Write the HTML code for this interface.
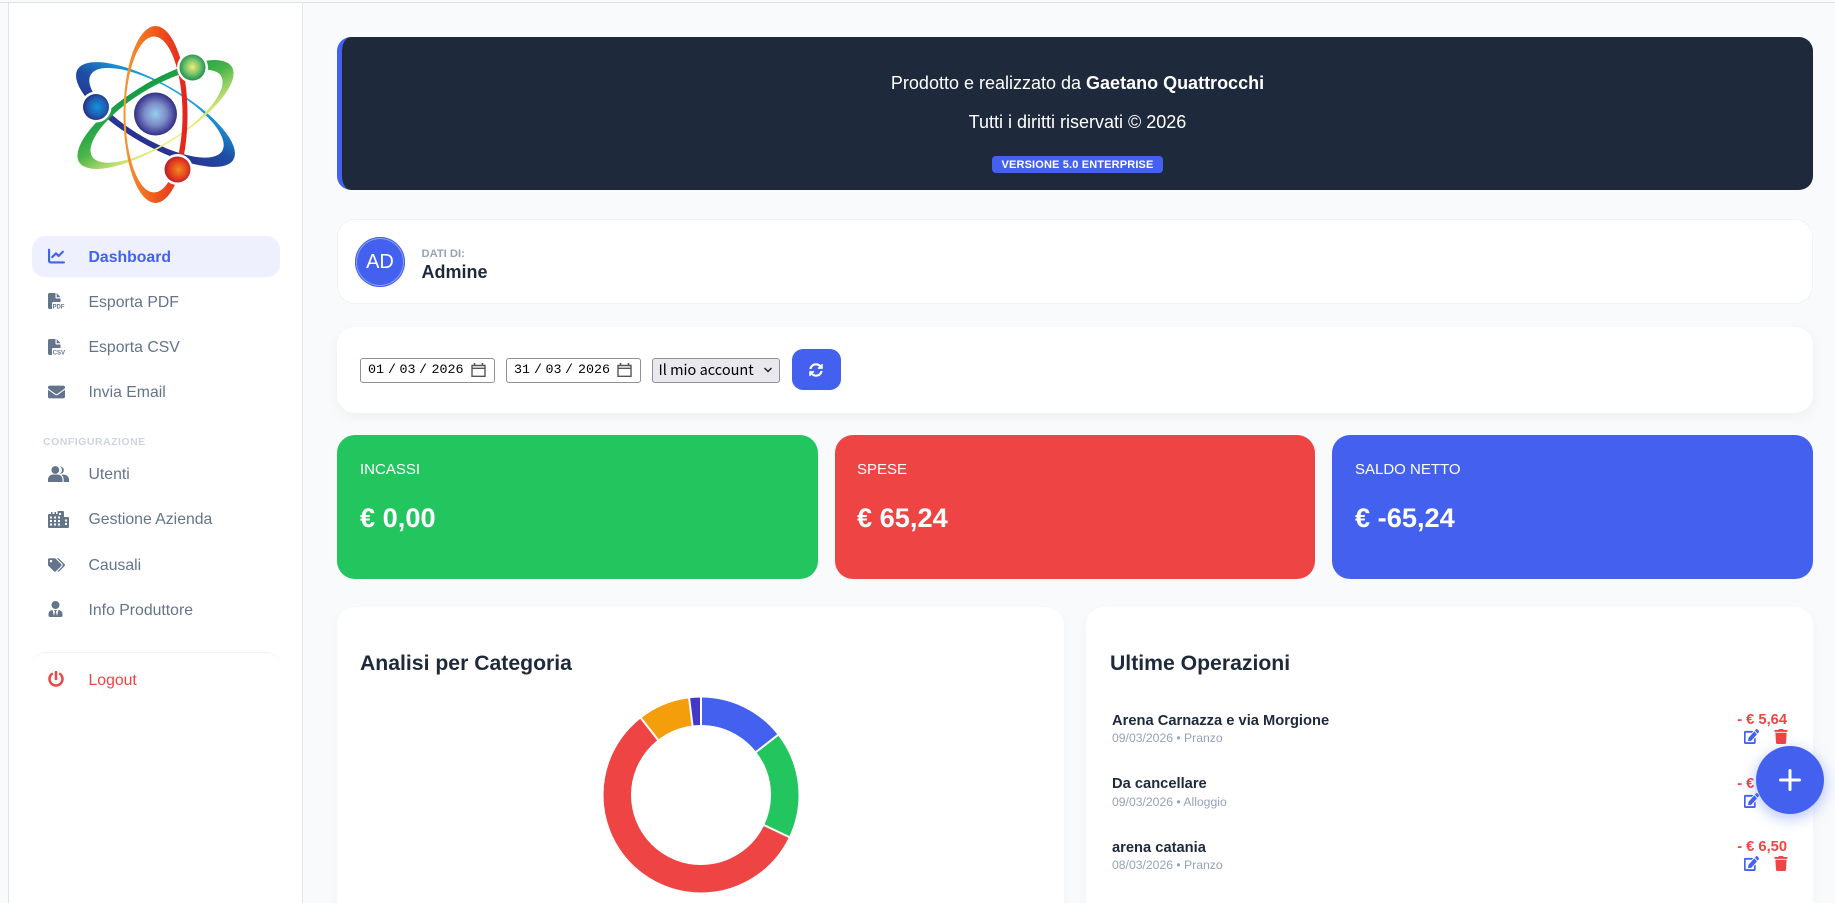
<!DOCTYPE html>
<html lang="it"><head><meta charset="utf-8"><title>Dashboard</title>
<style>
html,body{margin:0;padding:0;width:1835px;height:903px;overflow:hidden}
body{position:relative;background:#f8fafc;font-family:"Liberation Sans",Arial,sans-serif;color:#1e293b}
#w{position:absolute;left:0;top:0;width:1835px;height:903px;overflow:hidden}
.a{position:absolute}
.t{position:absolute;white-space:nowrap;line-height:1}
.nav{position:absolute;left:88.5px;font-size:15.8px;color:#64748b;white-space:nowrap;line-height:20px}
.ic{position:absolute;fill:#64748b}
.card{position:absolute;background:#fff;border-radius:18px}
.stat{position:absolute;top:435px;height:144px;border-radius:18px;color:#fff}
.stat .l{position:absolute;left:23px;top:26px;font-size:15px;line-height:17px;white-space:nowrap}
.stat .v{position:absolute;left:23px;top:67px;font-size:27.2px;font-weight:700;line-height:32px;white-space:nowrap}
.date{position:absolute;top:358px;height:25px;box-sizing:border-box;border:1px solid #8f8f9d;border-radius:3px;background:#fff}
.d{position:absolute;top:358px;font-family:"Liberation Mono",monospace;font-size:13.33px;line-height:25px;color:#000;white-space:pre}
.name{position:absolute;left:1112px;font-size:14.7px;font-weight:700;line-height:16px;white-space:nowrap;color:#1e293b}
.sub{position:absolute;left:1112px;font-size:12.2px;line-height:14px;white-space:nowrap;color:#94a3b8}
.amt{position:absolute;right:48px;font-size:14.7px;font-weight:700;line-height:16px;white-space:nowrap;color:#ef4444}
</style></head><body><div id="w">

<!-- frame -->
<div class="a" style="left:0;top:2px;width:1835px;height:1px;background:#dfe1e7"></div>
<div class="a" style="left:8px;top:2px;width:295px;height:901px;background:#fff;border-left:1px solid #e0e2e8;border-right:1px solid #e2e8f0;box-sizing:border-box;border-top:1px solid #dfe1e7"></div>

<!-- logo -->
<svg class="a" style="left:60px;top:20px" width="190" height="190" viewBox="60 20 190 190">
<defs>
<linearGradient id="gr" gradientUnits="userSpaceOnUse" x1="-32" y1="0" x2="32" y2="0"><stop offset="0" stop-color="#f7982f"/><stop offset=".5" stop-color="#ee5a1c"/><stop offset="1" stop-color="#e3201f"/></linearGradient>
<linearGradient id="gg" gradientUnits="userSpaceOnUse" x1="-31" y1="0" x2="31" y2="0"><stop offset="0" stop-color="#129a46"/><stop offset=".45" stop-color="#4bb54a"/><stop offset="1" stop-color="#eef07e"/></linearGradient>
<linearGradient id="gb" gradientUnits="userSpaceOnUse" x1="-31" y1="0" x2="31" y2="0"><stop offset="0" stop-color="#2b2f8f"/><stop offset=".5" stop-color="#1d4fa5"/><stop offset="1" stop-color="#1ba3e0"/></linearGradient>
<radialGradient id="n" cx=".5" cy=".5" r=".5"><stop offset="0" stop-color="#93cfee"/><stop offset=".5" stop-color="#7f8ec8"/><stop offset=".92" stop-color="#3e3c94"/><stop offset="1" stop-color="#35337f"/></radialGradient>
<radialGradient id="bb" cx=".55" cy=".5" r=".55"><stop offset="0" stop-color="#0f95df"/><stop offset=".6" stop-color="#1f5fb0"/><stop offset="1" stop-color="#2a2a80"/></radialGradient>
<radialGradient id="bg" cx=".5" cy=".48" r=".55"><stop offset="0" stop-color="#f4ec70"/><stop offset=".5" stop-color="#7cc56e"/><stop offset="1" stop-color="#0f8a48"/></radialGradient>
<radialGradient id="br" cx=".55" cy=".5" r=".55"><stop offset="0" stop-color="#f08a1e"/><stop offset=".6" stop-color="#e6401f"/><stop offset="1" stop-color="#b01c30"/></radialGradient>
</defs>
<g transform="translate(155.5 114.5)">
<path fill="url(#gb)" fill-rule="evenodd" transform="rotate(-60)" d="M0-90A31 90 0 0 1 0 90A31 90 0 0 1 0-90ZM2-76A27.5 76 0 0 1 2 76A27.5 76 0 0 1 2-76Z"/>
<path fill="url(#gg)" fill-rule="evenodd" transform="rotate(58)" d="M0-90A31 90 0 0 1 0 90A31 90 0 0 1 0-90ZM2-76A27.5 76 0 0 1 2 76A27.5 76 0 0 1 2-76Z"/>
<path fill="url(#gr)" fill-rule="evenodd" d="M0-88.5A32 88.5 0 0 1 0 88.5A32 88.5 0 0 1 0-88.5ZM-1.5-78A28.5 78 0 0 1 -1.5 78A28.5 78 0 0 1 -1.5-78Z"/>
</g>
<circle cx="155.5" cy="114" r="21.5" fill="url(#n)"/>
<circle cx="96" cy="107" r="15.500" fill="#fff"/><circle cx="96" cy="107" r="13" fill="url(#bb)"/>
<circle cx="192.500" cy="67.500" r="15.500" fill="#fff"/><circle cx="192.500" cy="67.500" r="13" fill="url(#bg)"/>
<circle cx="177.500" cy="169.500" r="15.500" fill="#fff"/><circle cx="177.500" cy="169.500" r="13" fill="url(#br)"/>
</svg>

<!-- sidebar -->
<div class="a" style="left:32px;top:236px;width:248px;height:41px;border-radius:13px;background:#eef1fd"></div>
<svg class="ic" style="left:48px;top:248px;fill:#4361ee" width="17" height="16" viewBox="0 32 512 448"><path d="M64 64c0-17.700-14.300-32-32-32S0 46.300 0 64V400c0 44.200 35.800 80 80 80H480c17.700 0 32-14.300 32-32s-14.300-32-32-32H80c-8.800 0-16-7.200-16-16V64zm406.600 86.600c12.500-12.500 12.500-32.800 0-45.300s-32.800-12.500-45.300 0L320 210.700l-57.400-57.400c-12.500-12.500-32.800-12.500-45.300 0l-112 112c-12.500 12.500-12.500 32.800 0 45.300s32.800 12.500 45.300 0L240 221.300l57.400 57.400c12.500 12.500 32.800 12.500 45.300 0l128-128z"/></svg>
<div class="nav" style="top:248px;color:#4361ee;font-weight:700">Dashboard</div>

<svg class="ic" style="left:48px;top:293px" width="17" height="16" viewBox="0 0 17 16"><path d="M1.500 0H7.500V4.500c0 .6.400 1 1 1H12.500V9H5.500a1.500 1.500 0 0 0-1.500 1.500V16H1.500C.7 16 0 15.300 0 14.500V1.500C0 .7.700 0 1.500 0ZM8.700 0L12.500 4.300H8.700Z"/><text x="4.600" y="15.700" font-family="Liberation Sans" font-size="6.200" font-weight="700" textLength="11.800" lengthAdjust="spacingAndGlyphs">PDF</text></svg>
<div class="nav" style="top:293px">Esporta PDF</div>

<svg class="ic" style="left:48px;top:339px" width="18" height="16" viewBox="0 0 18 16"><path d="M1.500 0H7.500V4.500c0 .6.400 1 1 1H12.500V9H5.500a1.500 1.500 0 0 0-1.500 1.500V16H1.500C.7 16 0 15.300 0 14.500V1.500C0 .7.700 0 1.500 0ZM8.700 0L12.500 4.300H8.700Z"/><text x="4.600" y="15.700" font-family="Liberation Sans" font-size="6.200" font-weight="700" textLength="12.500" lengthAdjust="spacingAndGlyphs">CSV</text></svg>
<div class="nav" style="top:338px">Esporta CSV</div>

<svg class="ic" style="left:48px;top:385px" width="17" height="14" viewBox="0 64 512 384"><path d="M502.300 190.800c3.900-3.100 9.700-.2 9.700 4.700V400c0 26.500-21.500 48-48 48H48c-26.500 0-48-21.500-48-48V195.600c0-5 5.700-7.800 9.700-4.700 22.400 17.400 52.100 39.500 154.100 113.600 21.100 15.400 56.700 47.800 92.200 47.600 35.700.3 72-32.800 92.300-47.600 102-74.100 131.600-96.300 154-113.700zM256 320c23.200.4 56.600-29.200 73.400-41.400 132.700-96.300 142.800-104.700 173.400-128.700 5.800-4.500 9.200-11.500 9.200-18.900v-19c0-26.500-21.500-48-48-48H48C21.500 64 0 85.500 0 112v19c0 7.400 3.400 14.300 9.200 18.900 30.600 23.900 40.700 32.400 173.400 128.700 16.800 12.200 50.200 41.800 73.400 41.400z"/></svg>
<div class="nav" style="top:383px">Invia Email</div>

<div class="t" style="left:43px;top:437px;font-size:10.5px;font-weight:700;color:#cbd5e1;letter-spacing:.5px">CONFIGURAZIONE</div>

<svg class="ic" style="left:48px;top:466px" width="21" height="16" viewBox="0 0 21 16"><circle cx="7.300" cy="4" r="3.900"/><path d="M0 16V13.500C0 10.500 2.500 8.500 5 8.500H9.500C12 8.500 14.500 10.500 14.500 13.500V16Z"/><path d="M11.500 7.700A3.900 3.900 0 0 0 11.800.6 3.600 3.600 0 1 1 11.500 7.700Z"/><path d="M13.200 8.600H15.800C18.600 8.600 21 10.800 21 13.500V16H15.700V13.500C15.700 11.500 14.700 9.800 13.200 8.600Z"/></svg>
<div class="nav" style="top:465px">Utenti</div>

<svg class="ic" style="left:48px;top:511px" width="21" height="17" viewBox="0 0 21 17"><path fill-rule="evenodd" d="M1 3H3V1H4.500V3H6.500V1H8V3H9.500V1A1 1 0 0 1 10.500 0H15A1 1 0 0 1 16 1V6H20A1 1 0 0 1 21 7V16A1 1 0 0 1 20 17H1A1 1 0 0 1 0 16V4A1 1 0 0 1 1 3ZM2 5.500V7.500H4V5.500ZM2 9V11H4V9ZM2 12.500V14.500H4V12.500ZM6 5.500V7.500H8V5.500ZM6 9V11H8V9ZM6 12.500V14.500H8V12.500ZM10 5.500V7.500H12V5.500ZM10 9V11H12V9ZM10 12.500V14.500H12V12.500ZM11 2V4H13V2ZM17 8.500V10.500H19V8.500ZM17 12V14H19V12Z"/></svg>
<div class="nav" style="top:510px">Gestione Azienda</div>

<svg class="ic" style="left:48px;top:558px" width="17" height="14" viewBox="0 0 640 512"><path d="M497.941 225.941L286.059 14.059A48 48 0 0 0 252.118 0H48C21.490 0 0 21.490 0 48v204.118a48 48 0 0 0 14.059 33.941l211.882 211.882c18.744 18.745 49.136 18.746 67.882 0l204.118-204.118c18.745-18.745 18.745-49.137 0-67.882zM112 160c-26.510 0-48-21.490-48-48s21.490-48 48-48 48 21.490 48 48-21.490 48-48 48zm513.941 133.823L421.823 497.941c-18.745 18.745-49.137 18.745-67.882 0l-.36-.36L527.640 323.522c16.999-16.999 26.360-39.600 26.360-63.640s-9.362-46.641-26.360-63.640L331.397 0h48.721a48 48 0 0 1 33.941 14.059l211.882 211.882c18.745 18.745 18.745 49.137 0 67.882z"/></svg>
<div class="nav" style="top:556px">Causali</div>

<svg class="ic" style="left:48px;top:601px" width="15" height="16" viewBox="0 0 448 512"><path d="M224 256c70.700 0 128-57.300 128-128S294.700 0 224 0 96 57.300 96 128s57.300 128 128 128zm95.800 32.600L272 480l-32-136 32-56h-96l32 56-32 136-47.800-191.400C56.900 292 0 350.300 0 422.400V464c0 26.500 21.500 48 48 48h352c26.500 0 48-21.500 48-48v-41.600c0-72.100-56.900-130.400-128.200-133.800z"/></svg>
<div class="nav" style="top:601px">Info Produttore</div>

<div class="a" style="left:32px;top:652px;width:248px;height:30px;box-sizing:border-box;border-top:1px solid #eef0f3;border-radius:14px 14px 0 0"></div>
<svg class="ic" style="left:48px;top:671px;fill:#ef4444" width="16" height="16" viewBox="0 0 512 512"><path d="M400 54.100c63 45 104 118.600 104 201.900 0 136.800-110.800 247.700-247.500 248C120 504.300 8.200 393 8 256.400 7.900 173.100 48.900 99.300 111.800 54.200c11.700-8.300 28-4.800 35 7.700L162.600 90c5.900 10.500 3.100 23.800-6.600 31-41.500 30.800-68 79.600-68 134.900-.1 92.300 74.500 168.100 168 168.100 91.600 0 168.600-74.200 168-169.100-.3-51.800-24.700-101.800-68.100-134-9.700-7.200-12.400-20.500-6.500-30.900l15.800-28.100c7-12.400 23.200-16.100 34.800-7.800zM296 264V24c0-13.300-10.700-24-24-24h-32c-13.300 0-24 10.700-24 24v240c0 13.300 10.700 24 24 24h32c13.300 0 24-10.700 24-24z"/></svg>
<div class="nav" style="top:671px;color:#ef4444">Logout</div>

<!-- banner -->
<div class="a" style="left:337px;top:37px;width:1476px;height:153px;box-sizing:border-box;background:#1e293b;border-left:5px solid #4361ee;border-radius:14px"></div>
<div class="t" style="left:342px;width:1471px;top:73px;text-align:center;font-size:18px;line-height:20px;color:#fff">Prodotto e realizzato da <b>Gaetano Quattrocchi</b></div>
<div class="t" style="left:342px;width:1471px;top:112px;text-align:center;font-size:18px;line-height:20px;color:#fff">Tutti i diritti riservati © 2026</div>
<div class="t" style="left:992px;top:156px;width:171px;height:17px;background:#4361ee;border-radius:4px;text-align:center;color:#fff;font-size:11px;font-weight:700;line-height:18px;letter-spacing:.15px">VERSIONE 5.0 ENTERPRISE</div>

<!-- user card -->
<div class="card" style="left:337px;top:219px;width:1476px;height:85px;box-sizing:border-box;border:1px solid #f0f2f5"></div>
<div class="a" style="left:355px;top:237px;width:50px;height:50px;border-radius:50%;background:#4361ee;box-shadow:inset 0 0 0 1px #4361ee,inset 0 0 0 2px #8ea1f4"></div>
<div class="t" style="left:355px;width:50px;top:252px;text-align:center;font-size:20px;line-height:20px;color:#fff">AD</div>
<div class="t" style="left:421.5px;top:249px;font-size:11.2px;font-weight:700;color:#94a3b8">DATI DI:</div>
<div class="t" style="left:421.5px;top:262px;font-size:18px;font-weight:700;line-height:21px;color:#1e293b">Admine</div>

<!-- filters -->
<div class="card" style="left:337px;top:327px;width:1476px;height:86px;box-shadow:0 4px 12px rgba(0,0,0,.05)"></div>
<div class="date" style="left:360px;width:135px"></div>
<div class="d" style="left:368px">01</div><div class="d" style="left:388px">/</div><div class="d" style="left:399.5px">03</div><div class="d" style="left:419px">/</div><div class="d" style="left:431.5px">2026</div>
<svg class="a" style="left:471px;top:362px" width="15" height="16" viewBox="0 0 15 16"><path fill="none" stroke="#555" stroke-width="1.4" d="M1 3.500H14V14.300H1ZM1 6.300H14"/><path d="M3.500 1V4M11.500 1V4" stroke="#555" stroke-width="1.6"/></svg>
<div class="date" style="left:506px;width:135px"></div>
<div class="d" style="left:514px">31</div><div class="d" style="left:534px">/</div><div class="d" style="left:545.5px">03</div><div class="d" style="left:565px">/</div><div class="d" style="left:578px">2026</div>
<svg class="a" style="left:617px;top:362px" width="15" height="16" viewBox="0 0 15 16"><path fill="none" stroke="#555" stroke-width="1.4" d="M1 3.500H14V14.300H1ZM1 6.300H14"/><path d="M3.500 1V4M11.500 1V4" stroke="#555" stroke-width="1.6"/></svg>
<div class="a" style="left:652px;top:358px;width:128px;height:25px;box-sizing:border-box;border:1px solid #8f8f9d;border-radius:3px;background:#e9e9ed"></div>
<div class="t" style="left:658.5px;top:358px;font-family:'Noto Sans CJK SC',sans-serif;font-size:14.5px;line-height:24px;color:#000">Il mio account</div>
<svg class="a" style="left:763px;top:366px" width="10" height="8" viewBox="0 0 10 8"><path d="M1.500 2L5 5.500 8.500 2" fill="none" stroke="#222" stroke-width="1.500"/></svg>
<div class="a" style="left:792px;top:349px;width:49px;height:41px;border-radius:11px;background:#4361ee"></div>
<svg class="a" style="left:809px;top:363px;fill:#fff" width="14" height="14" viewBox="0 0 512 512"><path d="M370.720 133.280C339.458 104.008 298.888 87.962 255.848 88c-77.458.068-144.328 53.178-162.791 126.850-1.344 5.363-6.122 9.150-11.651 9.150H24.103c-7.498 0-13.194-6.807-11.807-14.176C33.933 94.924 134.813 8 256 8c66.448 0 126.791 26.136 171.315 68.685L463.030 40.970C478.149 25.851 504 36.559 504 57.941V192c0 13.255-10.745 24-24 24H345.941c-21.382 0-32.090-25.851-16.971-40.971l41.750-41.749zM32 296h134.059c21.382 0 32.090 25.851 16.971 40.971l-41.750 41.750c31.262 29.273 71.835 45.319 114.876 45.280 77.418-.07 144.315-53.144 162.787-126.849 1.344-5.363 6.122-9.150 11.651-9.150h57.304c7.498 0 13.194 6.807 11.807 14.176C478.067 417.076 377.187 504 256 504c-66.448 0-126.791-26.136-171.315-68.685L48.970 471.030C33.851 486.149 8 475.441 8 454.059V320c0-13.255 10.745-24 24-24z"/></svg>

<!-- stats -->
<div class="stat" style="left:337px;width:481px;background:#22c55e"><div class="l">INCASSI</div><div class="v">€ 0,00</div></div>
<div class="stat" style="left:835px;width:480px;background:#ef4444"><div class="l" style="left:22px">SPESE</div><div class="v" style="left:22px">€ 65,24</div></div>
<div class="stat" style="left:1332px;width:481px;background:#4361ee"><div class="l" style="left:23px">SALDO NETTO</div><div class="v" style="left:23px">€ -65,24</div></div>

<!-- bottom cards -->
<div class="card" style="left:337px;top:607px;width:727px;height:320px;box-shadow:0 4px 12px rgba(0,0,0,.03)"></div>
<div class="card" style="left:1086px;top:607px;width:727px;height:320px;box-shadow:0 4px 12px rgba(0,0,0,.03)"></div>
<div class="t" style="left:360px;top:652px;font-size:21.2px;font-weight:700;line-height:24px">Analisi per Categoria</div>
<div class="t" style="left:1110px;top:652px;font-size:21.2px;font-weight:700;line-height:24px">Ultime Operazioni</div>

<!-- donut -->
<svg class="a" style="left:590px;top:685px" width="222" height="218" viewBox="-111 -110 222 218">
<g fill="none" stroke-width="27.500" transform="rotate(-90)">
<circle r="83.750" pathLength="360" stroke="#4361ee" stroke-dasharray="52 360" stroke-dashoffset="0"/>
<circle r="83.750" pathLength="360" stroke="#22c55e" stroke-dasharray="63.500 360" stroke-dashoffset="-52"/>
<circle r="83.750" pathLength="360" stroke="#ef4444" stroke-dasharray="206.500 360" stroke-dashoffset="-115.500"/>
<circle r="83.750" pathLength="360" stroke="#f59e0b" stroke-dasharray="31 360" stroke-dashoffset="-322"/>
<circle r="83.750" pathLength="360" stroke="#4338ca" stroke-dasharray="7 360" stroke-dashoffset="-353"/>
</g>
<g stroke="#fff" stroke-width="2">
<path d="M0-68V-99" transform="rotate(0)"/><path d="M0-68V-99" transform="rotate(52)"/><path d="M0-68V-99" transform="rotate(115.500)"/><path d="M0-68V-99" transform="rotate(322)"/><path d="M0-68V-99" transform="rotate(353)"/>
</g>
</svg>

<!-- operations -->
<div class="name" style="top:713px">Arena Carnazza e via Morgione</div><div class="sub" style="top:731px">09/03/2026 • Pranzo</div>
<div class="name" style="top:776px">Da cancellare</div><div class="sub" style="top:795px">09/03/2026 • Alloggio</div>
<div class="name" style="top:840px">arena catania</div><div class="sub" style="top:858px">08/03/2026 • Pranzo</div>
<div class="amt" style="top:712px">- € 5,64</div>
<div class="amt" style="top:776px">- € 5,00</div>
<div class="amt" style="top:839px">- € 6,50</div>
<svg width="0" height="0" style="position:absolute"><defs>
<path id="ed" d="M402.600 83.200l90.200 90.200c3.800 3.800 3.800 10 0 13.800L274.400 405.600l-92.800 10.300c-12.400 1.400-22.900-9.100-21.500-21.500l10.300-92.800L388.800 83.200c3.800-3.800 10-3.800 13.800 0zm162-22.900l-48.800-48.800c-15.200-15.200-39.900-15.200-55.200 0l-35.400 35.400c-3.800 3.800-3.800 10 0 13.800l90.200 90.200c3.800 3.800 10 3.800 13.800 0l35.400-35.400c15.200-15.300 15.200-40 0-55.200zM384 346.200V448H64V128h229.800c3.200 0 6.200-1.300 8.500-3.500l40-40c7.600-7.600 2.200-20.500-8.500-20.500H48C21.500 64 0 85.500 0 112v352c0 26.500 21.500 48 48 48h352c26.500 0 48-21.500 48-48V306.200c0-10.700-12.900-16-20.500-8.500l-40 40c-2.200 2.300-3.500 5.300-3.500 8.500z"/>
<path id="tr" d="M432 32H312l-9.400-18.700A24 24 0 0 0 281.100 0H166.800a23.720 23.720 0 0 0-21.400 13.300L136 32H16A16 16 0 0 0 0 48v32a16 16 0 0 0 16 16h416a16 16 0 0 0 16-16V48a16 16 0 0 0-16-16zM53.200 467a48 48 0 0 0 47.900 45h245.800a48 48 0 0 0 47.900-45L416 128H32z"/>
</defs></svg>
<svg class="a" style="left:1744px;top:729px;fill:#4361ee" width="15" height="15" viewBox="0 0 576 512" preserveAspectRatio="none"><use href="#ed"/></svg>
<svg class="a" style="left:1774px;top:729px;fill:#ef4444" width="14" height="15" viewBox="0 0 448 512"><use href="#tr"/></svg>
<svg class="a" style="left:1744px;top:793px;fill:#4361ee" width="15" height="15" viewBox="0 0 576 512" preserveAspectRatio="none"><use href="#ed"/></svg>
<svg class="a" style="left:1774px;top:793px;fill:#ef4444" width="14" height="15" viewBox="0 0 448 512"><use href="#tr"/></svg>
<svg class="a" style="left:1744px;top:856px;fill:#4361ee" width="15" height="15" viewBox="0 0 576 512" preserveAspectRatio="none"><use href="#ed"/></svg>
<svg class="a" style="left:1774px;top:856px;fill:#ef4444" width="14" height="15" viewBox="0 0 448 512"><use href="#tr"/></svg>

<!-- fab -->
<div class="a" style="left:1756px;top:746px;width:68px;height:68px;border-radius:50%;background:#4361ee;box-shadow:0 4px 15px rgba(67,97,238,.4)"></div>
<svg class="a" style="left:1778px;top:768px" width="24" height="24" viewBox="0 0 24 24"><path d="M12 2.500V21.500M2.500 12H21.500" stroke="#fff" stroke-width="3" stroke-linecap="round"/></svg>
</div></body></html>
